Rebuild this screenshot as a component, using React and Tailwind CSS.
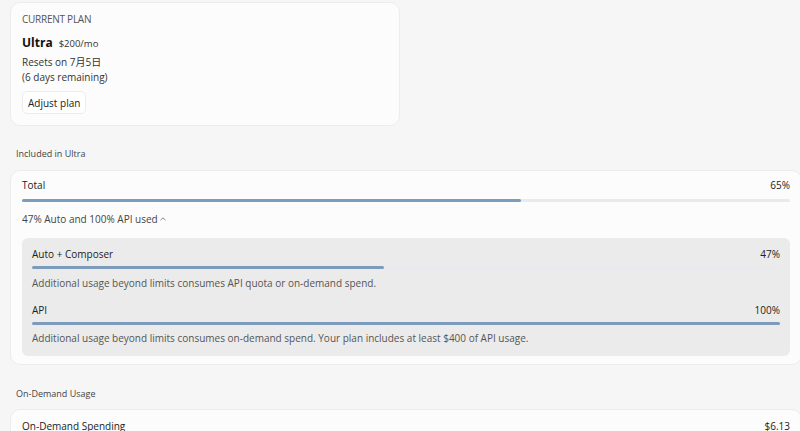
import React from 'react';

const Bar = ({ value }) => (
  <div className="h-[3px] w-full rounded-full bg-[#e8eaed]">
    <div className="h-full rounded-full bg-[#7d9bbd]" style={{ width: `${value}%` }} />
  </div>
);

const App = () => {
  return (
    <div className="h-[431px] w-full overflow-hidden bg-[#f6f6f6] text-[#2a2a2a]" style={{ fontFamily: '"Open Sans", "Noto Sans CJK JP", sans-serif' }}>
      <div className="w-[802px] pl-[10px] pt-[2px]">
        {/* current plan */}
        <div className="w-[390px] rounded-[10px] border border-[#ececec] bg-[#fcfcfc] px-[11px] pb-[11px] pt-[9px]">
          <div className="text-[10px] leading-[14px] tracking-tight text-[#555]">CURRENT PLAN</div>
          <div className="mt-[9px] flex items-baseline gap-[6px]">
            <span className="text-[12px] font-bold leading-[16px] text-[#111]">Ultra</span>
            <span className="text-[9.5px] text-[#333]">$200/mo</span>
          </div>
          <div className="mt-[4px] text-[10px] leading-[15px] text-[#333]">
            <div>Resets on 7月5日</div>
            <div>(6 days remaining)</div>
          </div>
          <button className="mt-[6px] rounded-[5px] border border-[#ececec] bg-white px-[5px] py-[3.5px] text-[10px] leading-[14px] text-[#222]">
            Adjust plan
          </button>
        </div>

        <div className="mt-[21px] pl-[6px] text-[9px] leading-[14px] text-[#444]">Included in Ultra</div>

        {/* included usage */}
        <div className="mt-[9px] rounded-[10px] border border-[#ececec] bg-[#fcfcfc] px-[11px] pb-[8px] pt-[7px]">
          <div className="flex items-center justify-between text-[10px] leading-[14px] text-[#222]">
            <span>Total</span>
            <span>65%</span>
          </div>
          <div className="mt-[7px]">
            <Bar value={65} />
          </div>
          <div className="mt-[10px] flex items-center text-[10px] leading-[14px] text-[#444]">
            47% Auto and 100% API used
            <svg className="ml-[1px]" width="8" height="8" viewBox="0 0 8 8" fill="none" stroke="#777" strokeWidth="0.9">
              <path d="M1.5 5.2 4 2.8l2.5 2.4" />
            </svg>
          </div>
          <div className="mt-[12px] rounded-[6px] bg-[#ebebeb] px-[10px] pb-[11px] pt-[9px]">
            <div className="flex items-center justify-between text-[10px] leading-[14px] text-[#222]">
              <span>Auto + Composer</span>
              <span>47%</span>
            </div>
            <div className="mt-[5px]">
              <Bar value={47} />
            </div>
            <div className="mt-[7px] text-[10px] leading-[14px] text-[#555]">
              Additional usage beyond limits consumes API quota or on-demand spend.
            </div>
            <div className="mt-[13px] flex items-center justify-between text-[10px] leading-[14px] text-[#222]">
              <span>API</span>
              <span>100%</span>
            </div>
            <div className="mt-[5px]">
              <Bar value={100} />
            </div>
            <div className="mt-[6px] text-[10px] leading-[14px] text-[#555]">
              Additional usage beyond limits consumes on-demand spend. Your plan includes at least $400 of API usage.
            </div>
          </div>
        </div>

        <div className="mt-[22px] pl-[6px] text-[9px] leading-[14px] text-[#444]">On-Demand Usage</div>

        <div className="mt-[8px] rounded-[10px] border border-[#ececec] bg-[#fcfcfc] px-[11px] pb-[9px] pt-[9px]">
          <div className="flex items-center justify-between text-[10px] leading-[14px] text-[#222]">
            <span>On-Demand Spending</span>
            <span>$6.13</span>
          </div>
        </div>
      </div>
    </div>
  );
};

export default App;
